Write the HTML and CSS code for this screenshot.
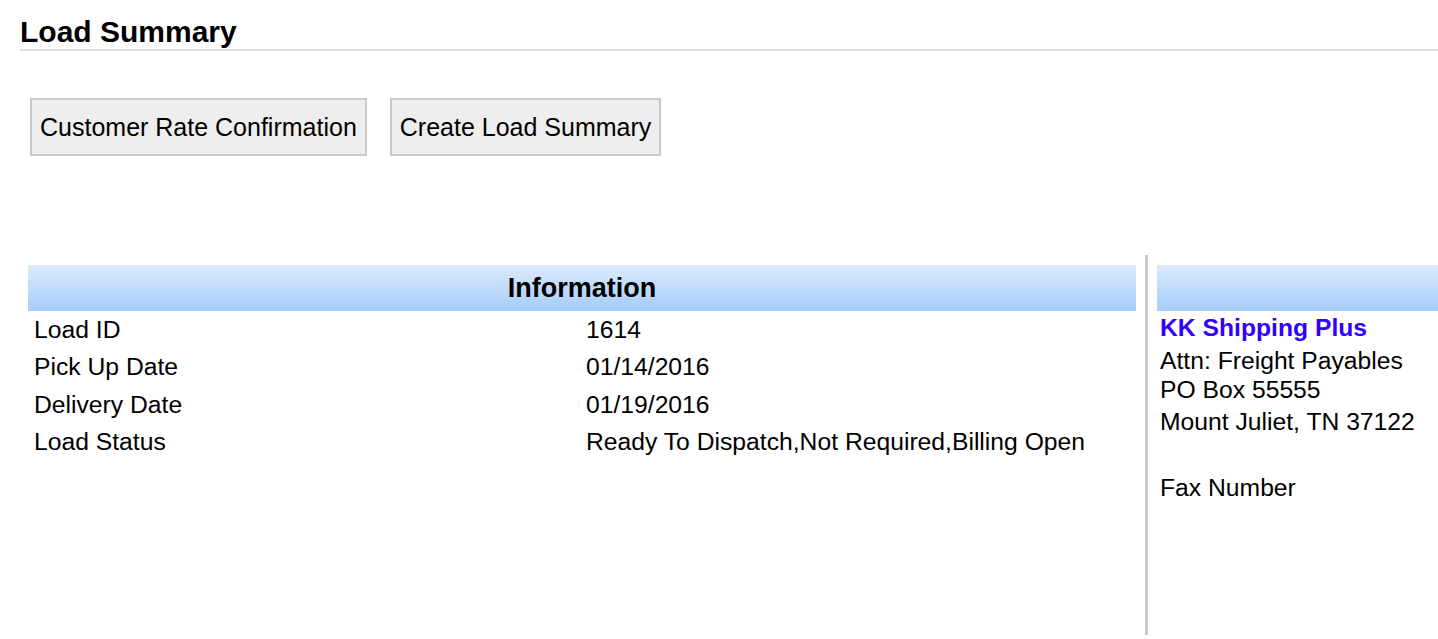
FILE: index.html
```html
<!DOCTYPE html>
<html lang="en">
<head>
    <meta charset="UTF-8">
    <title>Load Summary</title>
    <link rel="stylesheet" href="styles.css">
</head>
<body>
    <div class="page">
        <h2 class="page-title">Load Summary</h2>
        <div class="actions">
            <button class="btn" type="button">Customer Rate Confirmation</button>
            <button class="btn" type="button">Create Load Summary</button>
        </div>
        <div class="load">
            <div class="info">
                <div class="info-head">Information</div>
                <div class="info-row"><span>Load ID</span><span>1614</span></div>
                <div class="info-row"><span>Pick Up Date</span><span>01/14/2016</span></div>
                <div class="info-row"><span>Delivery Date</span><span>01/19/2016</span></div>
                <div class="info-row"><span>Load Status</span><span>Ready To Dispatch,Not Required,Billing Open</span></div>
            </div>
            <div class="side">
                <div class="side-head"></div>
                <div class="company">KK Shipping Plus</div>
                <div class="attn">Attn: Freight Payables</div>
                <div class="street">PO Box 55555</div>
                <div class="city">Mount Juliet, TN 37122</div>
                <div class="fax">Fax Number</div>
            </div>
        </div>
    </div>
</body>
</html>
```

FILE: styles.css
```css
*{
    margin: 0;
    padding: 0;
    box-sizing: border-box;
}
body{
    font-family: "Liberation Sans", Arial, sans-serif;
    font-size: 24.7px;
    color: #000;
    background: #fff;
    overflow: hidden;
}
.page{
    padding-left: 20px;
}
.page-title{
    margin-top: 14px;
    font-size: 30px;
    line-height: 35px;
    font-weight: bold;
    border-bottom: 2px solid #dcdcdc;
}
.actions{
    display: flex;
    gap: 23px;
    margin-top: 47px;
    padding-left: 10px;
}
.btn{
    height: 58px;
    padding: 0 8px;
    font-family: inherit;
    font-size: 25px;
    color: #000;
    background: #eee;
    border: 2px solid #c9c9c9;
}
.load{
    display: flex;
    margin-top: 99px;
    padding-left: 8px;
}
.info{
    width: 1108px;
    margin-right: 9px;
    padding-top: 10px;
}
.info-head,
.side-head{
    height: 46px;
    background: linear-gradient(#dceafd, #a5ccf9);
}
.info-head{
    line-height: 46px;
    text-align: center;
    font-size: 27px;
    font-weight: bold;
}
.info-row{
    display: grid;
    grid-template-columns: 552px 1fr;
    line-height: 37.4px;
}
.info-row span{
    padding-left: 6px;
}
.side{
    flex: 1;
    min-height: 380px;
    padding: 10px 0 0 9px;
    border-left: 3px solid #ccc;
}
.side > div{
    padding-left: 3px;
    white-space: nowrap;
}
.side > .side-head{
    padding: 0;
}
.company{
    line-height: 33px;
    font-weight: bold;
    color: #3300ff;
}
.attn{
    line-height: 33px;
}
.street{
    line-height: 26px;
}
.city{
    line-height: 38px;
}
.fax{
    margin-top: 30px;
    line-height: 33px;
}
```
